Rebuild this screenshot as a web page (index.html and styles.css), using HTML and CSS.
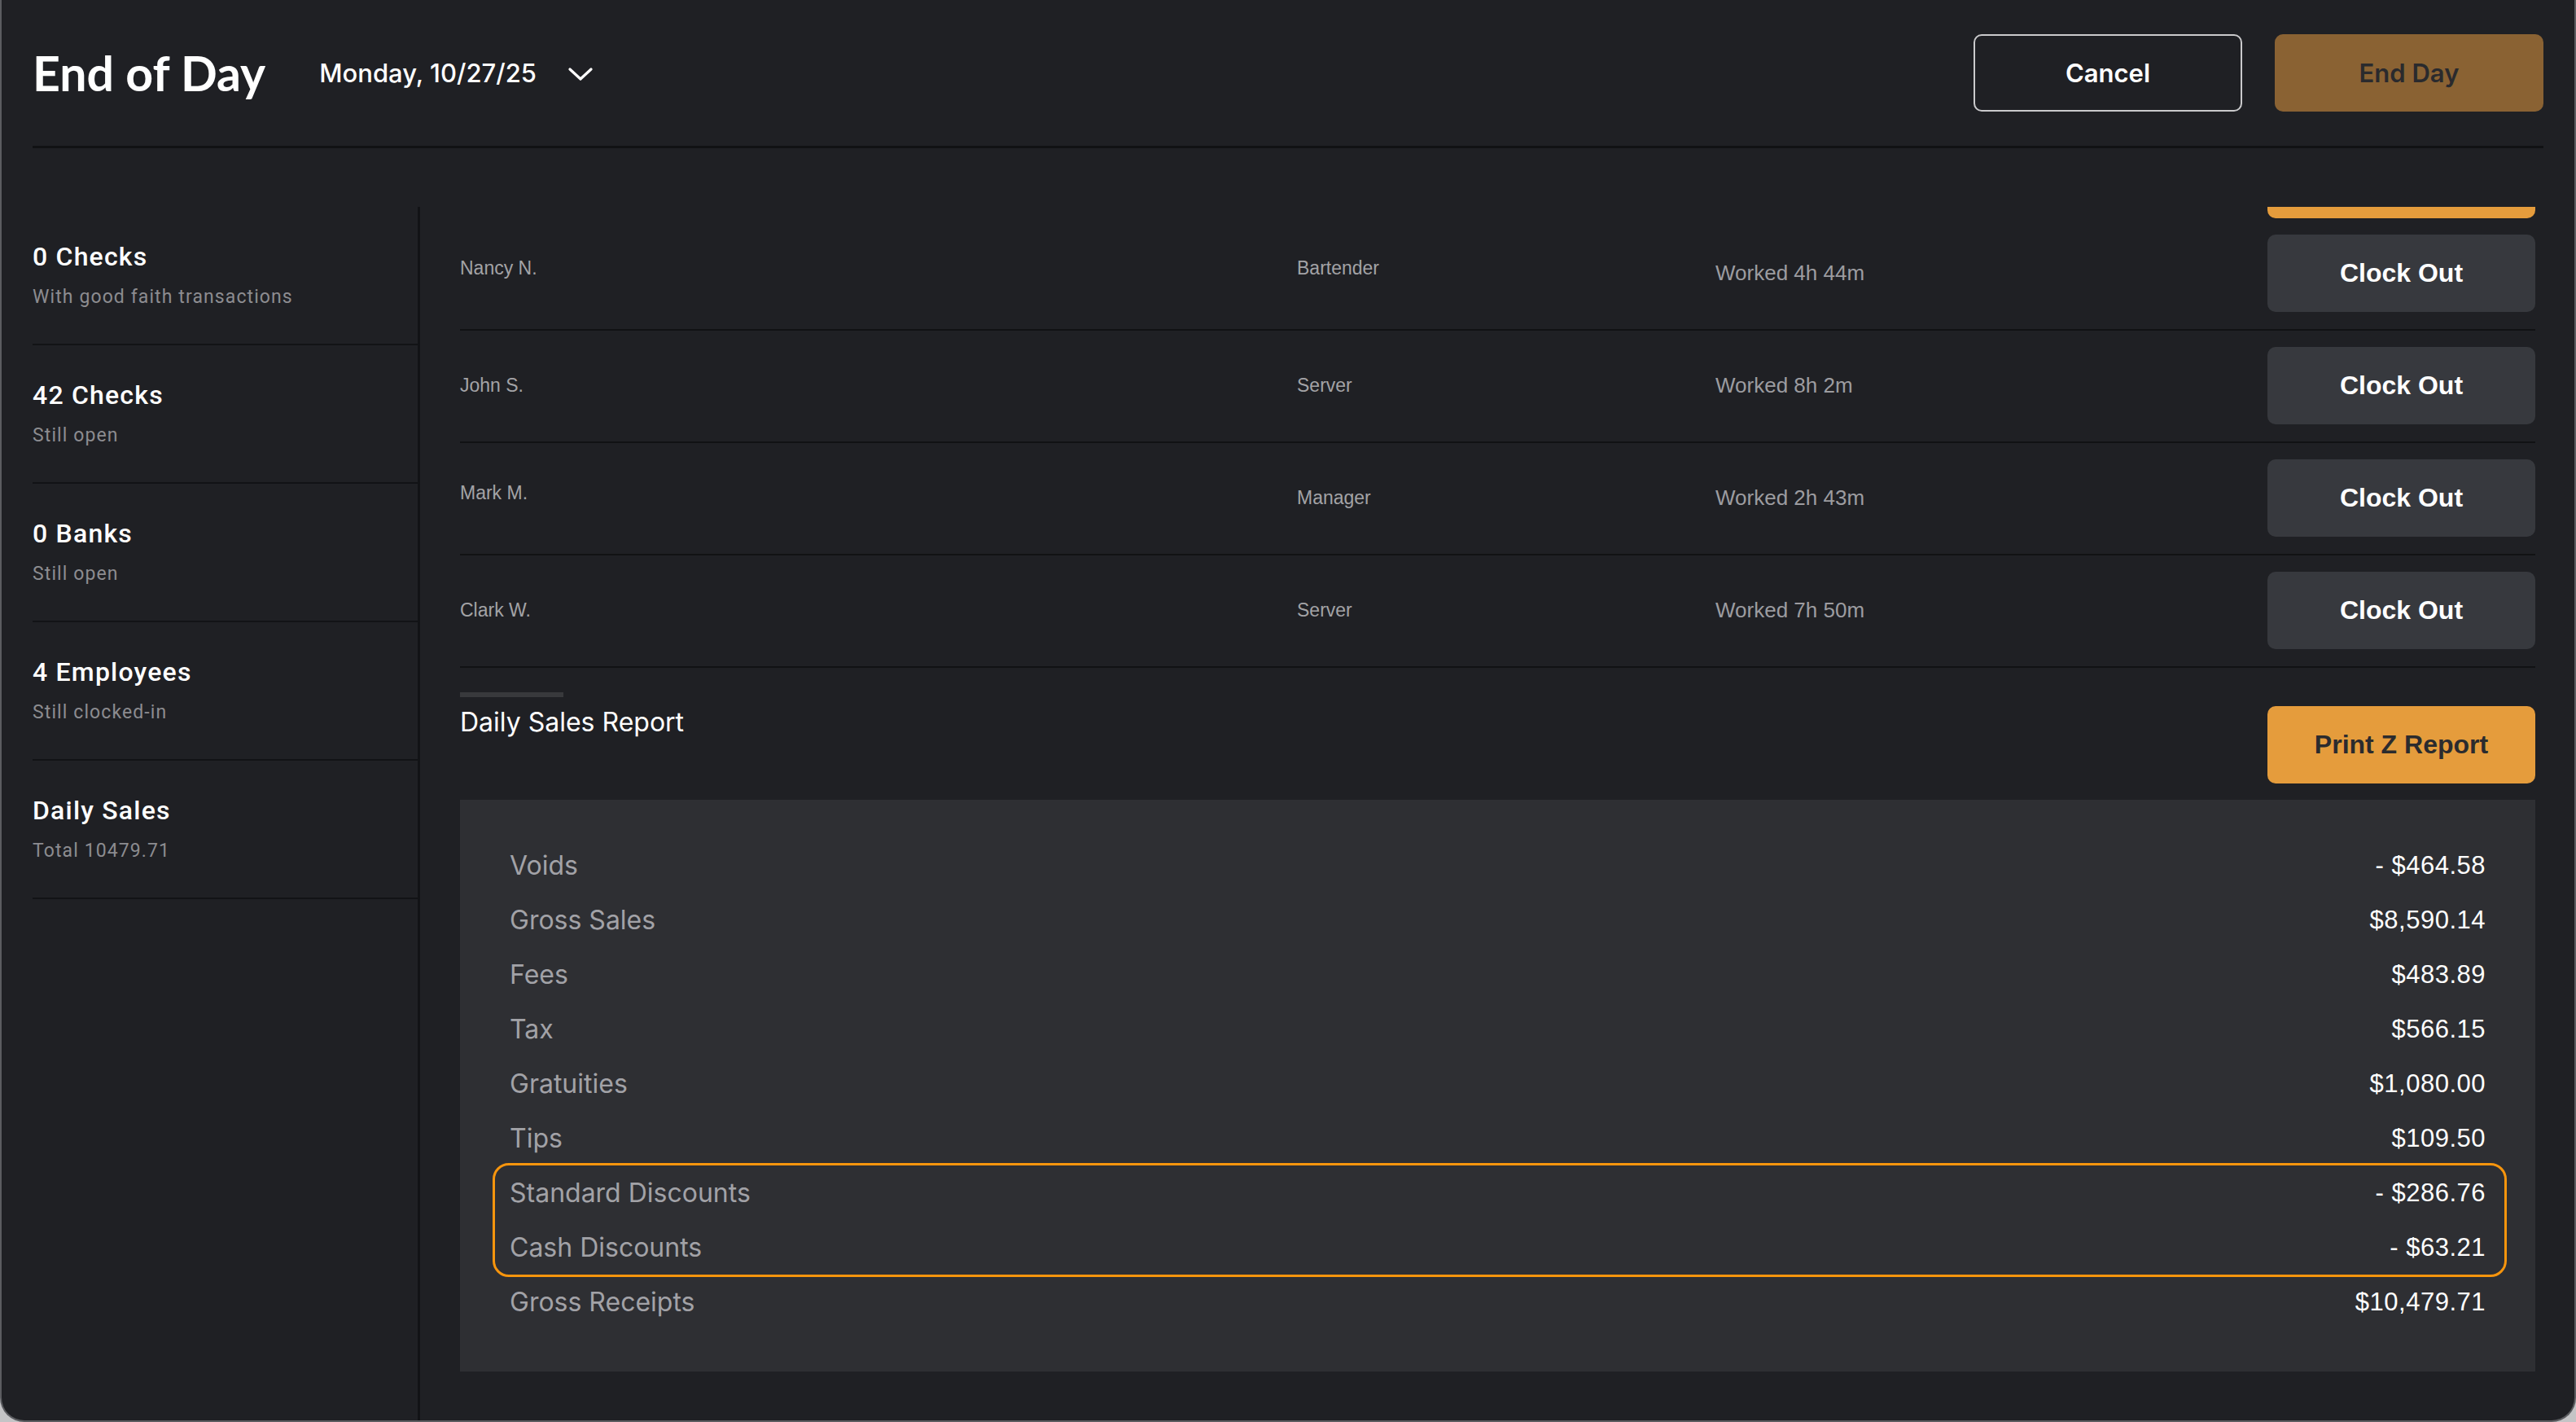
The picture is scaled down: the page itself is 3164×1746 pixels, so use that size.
FILE: index.html
```html
<!DOCTYPE html>
<html lang="en">
<head>
  <meta charset="UTF-8">
  <meta name="viewport" content="width=device-width, initial-scale=1.0">
  <title>End of Day</title>
  <link rel="stylesheet" href="styles.css">
</head>
<body>
  <div class="window">

    <!-- Header -->
    <div class="header">
      <h1>End of Day</h1>
      <div class="date-picker">
        <span>Monday, 10/27/25</span>
        <svg class="chevron" width="30" height="16" viewBox="0 0 30 16">
          <polyline points="2,2 15,14 28,2" fill="none" stroke="#ffffff" stroke-width="3.2" stroke-linecap="round" stroke-linejoin="round"/>
        </svg>
      </div>
      <div class="header-actions">
        <button class="btn-outline">Cancel</button>
        <button class="btn-end">End Day</button>
      </div>
    </div>

    <div class="main">
      <!-- Sidebar -->
      <div class="sidebar">
        <div class="side-item">
          <div class="side-title">0 Checks</div>
          <div class="side-sub">With good faith transactions</div>
        </div>
        <div class="side-item">
          <div class="side-title">42 Checks</div>
          <div class="side-sub">Still open</div>
        </div>
        <div class="side-item">
          <div class="side-title">0 Banks</div>
          <div class="side-sub">Still open</div>
        </div>
        <div class="side-item">
          <div class="side-title">4 Employees</div>
          <div class="side-sub">Still clocked-in</div>
        </div>
        <div class="side-item">
          <div class="side-title">Daily Sales</div>
          <div class="side-sub">Total 10479.71</div>
        </div>
      </div>

      <!-- Content -->
      <div class="content">
        <div class="scroll-stub"></div>

        <div class="emp-row">
          <div class="emp-name up">Nancy N.</div>
          <div class="emp-role up">Bartender</div>
          <div class="emp-worked">Worked 4h 44m</div>
          <button class="btn-clock">Clock Out</button>
        </div>
        <div class="emp-row">
          <div class="emp-name">John S.</div>
          <div class="emp-role">Server</div>
          <div class="emp-worked">Worked 8h 2m</div>
          <button class="btn-clock">Clock Out</button>
        </div>
        <div class="emp-row">
          <div class="emp-name up">Mark M.</div>
          <div class="emp-role">Manager</div>
          <div class="emp-worked">Worked 2h 43m</div>
          <button class="btn-clock">Clock Out</button>
        </div>
        <div class="emp-row">
          <div class="emp-name">Clark W.</div>
          <div class="emp-role">Server</div>
          <div class="emp-worked">Worked 7h 50m</div>
          <button class="btn-clock">Clock Out</button>
        </div>

        <!-- Daily Sales Report -->
        <div class="report">
          <div class="report-bar"></div>
          <div class="report-head">
            <h2>Daily Sales Report</h2>
            <button class="btn-print">Print Z Report</button>
          </div>
          <div class="report-panel">
            <div class="report-row"><span class="label">Voids</span><span class="value">- $464.58</span></div>
            <div class="report-row"><span class="label">Gross Sales</span><span class="value">$8,590.14</span></div>
            <div class="report-row"><span class="label">Fees</span><span class="value">$483.89</span></div>
            <div class="report-row"><span class="label">Tax</span><span class="value">$566.15</span></div>
            <div class="report-row"><span class="label">Gratuities</span><span class="value">$1,080.00</span></div>
            <div class="report-row"><span class="label">Tips</span><span class="value">$109.50</span></div>
            <div class="highlight">
              <div class="report-row"><span class="label">Standard Discounts</span><span class="value">- $286.76</span></div>
              <div class="report-row"><span class="label">Cash Discounts</span><span class="value">- $63.21</span></div>
            </div>
            <div class="report-row"><span class="label">Gross Receipts</span><span class="value">$10,479.71</span></div>
          </div>
        </div>
      </div>
    </div>
  </div>
</body>
</html>
```

FILE: styles.css
```css
/* Reset & Body */
body {
  margin: 0;
  padding: 0;
  background: #c4c4c6;
  font-family: 'Liberation Sans', Arial, sans-serif;
}

.window {
  box-sizing: border-box;
  height: 1746px;
  padding: 0 38px;
  background: #1f2024;
  border: 2px solid #5b5c60;
  border-top: none;
  border-radius: 0 0 30px 30px;
  overflow: hidden;
  display: flex;
  flex-direction: column;
}

/* Header */
.header {
  display: flex;
  align-items: center;
  padding: 42px 0;
  border-bottom: 3px solid #111214;
}

.header h1 {
  margin: 0;
  font-family: 'Lato', sans-serif;
  font-weight: 700;
  font-size: 59px;
  line-height: 95px;
  color: #ffffff;
}

.date-picker {
  display: flex;
  align-items: center;
  margin-left: 66px;
  font-family: 'Inter', sans-serif;
  font-weight: 500;
  font-size: 31px;
  color: #ffffff;
}

.date-picker .chevron {
  margin-left: 39px;
  margin-top: 2px;
}

.header-actions {
  margin-left: auto;
  display: flex;
  gap: 40px;
}

.header-actions button {
  width: 330px;
  height: 95px;
  border-radius: 10px;
  font-family: 'Inter', sans-serif;
  font-weight: 600;
  font-size: 31px;
  cursor: pointer;
}

.btn-outline {
  background: transparent;
  color: #ffffff;
  border: 2px solid #cacacc;
}

.btn-end {
  background: #8a6233;
  color: #2a2a2d;
  border: none;
}

/* Main */
.main {
  flex: 1;
  display: flex;
  padding-top: 72px;
}

.sidebar {
  width: 473px;
  border-right: 3px solid #121316;
}

.side-item {
  padding: 41px 0 42px;
  border-bottom: 2px solid #121316;
}

.side-title {
  font-family: 'Roboto', sans-serif;
  font-weight: 500;
  font-size: 32px;
  line-height: 40px;
  letter-spacing: 1.2px;
  color: #ffffff;
}

.side-sub {
  margin-top: 15px;
  font-family: 'Roboto', sans-serif;
  font-size: 23px;
  line-height: 30px;
  letter-spacing: 1.1px;
  color: #8c8c90;
}

/* Content */
.content {
  flex: 1;
  padding: 0 10px 0 49px;
}

.scroll-stub {
  margin-left: auto;
  width: 329px;
  height: 14px;
  background: #e59c3c;
  border-radius: 0 0 10px 10px;
}

.emp-row {
  display: grid;
  grid-template-columns: 1028px 514px 1fr 329px;
  align-items: center;
  padding: 20px 0 21px;
  border-bottom: 2px solid #111214;
  color: #a3a3a6;
}

.emp-name,
.emp-role {
  font-size: 23px;
}

.emp-row .up {
  margin-bottom: 12px;
}

.emp-worked {
  font-size: 26px;
  color: #9c9ca0;
}

.btn-clock {
  height: 95px;
  border: none;
  border-radius: 10px;
  background: #37393e;
  color: #ffffff;
  font-family: 'Liberation Sans', Arial, sans-serif;
  font-weight: 700;
  font-size: 32px;
  cursor: pointer;
}

/* Report */
.report {
  padding-top: 30px;
}

.report-bar {
  width: 127px;
  height: 6px;
  background: #38393c;
}

.report-head {
  display: flex;
  justify-content: space-between;
  align-items: flex-start;
  margin-top: 11px;
}

.report-head h2 {
  margin: 0;
  font-family: 'Inter', sans-serif;
  font-weight: 400;
  font-size: 32px;
  line-height: 40px;
  color: #ffffff;
}

.btn-print {
  width: 329px;
  height: 95px;
  border: none;
  border-radius: 10px;
  background: #e59c3c;
  color: #2b2b2e;
  font-family: 'Liberation Sans', Arial, sans-serif;
  font-weight: 700;
  font-size: 32px;
  cursor: pointer;
}

.report-panel {
  margin-top: 20px;
  padding: 47px 61px 52px;
  background: #2e2f33;
}

.report-row {
  display: flex;
  justify-content: space-between;
  align-items: center;
  height: 67px;
}

.report-row .label {
  font-family: 'Inter', sans-serif;
  font-size: 32px;
  color: #a2a2a7;
}

.report-row .value {
  font-family: 'Liberation Sans', Arial, sans-serif;
  font-size: 31px;
  letter-spacing: 0.5px;
  color: #ffffff;
}

.highlight {
  margin: -3px -26px -3px -21px;
  padding: 0 23px 0 18px;
  border: 3px solid #f7950d;
  border-radius: 20px;
}
```
